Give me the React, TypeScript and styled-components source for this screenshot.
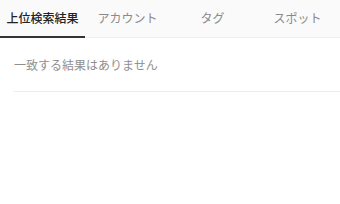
import React, { useState } from "react";
import styled, { createGlobalStyle } from "styled-components";

const Global = createGlobalStyle`
  html, body { margin: 0; padding: 0; background: #fff; }
  body { font-family: "Noto Sans CJK JP", "Noto Sans", sans-serif; }
`;

const Page = styled.div`
  width: 340px;
  height: 204px;
  background: #fff;
`;

const TabBar = styled.div`
  display: grid;
  grid-template-columns: repeat(4, 1fr);
  height: 38px;
  background: #fafafa;
  border-bottom: 1px solid #efefef;
  box-sizing: border-box;
`;

const Tab = styled.div<{ $active?: boolean }>`
  display: flex;
  align-items: center;
  justify-content: center;
  font-size: 12px;
  color: ${(p) => (p.$active ? "#222" : "#8a8a8a")};
  font-weight: ${(p) => (p.$active ? 500 : 400)};
  border-bottom: 2px solid ${(p) => (p.$active ? "#333" : "transparent")};
  margin-bottom: -1px;
  padding-bottom: 1px;
  box-sizing: border-box;
`;

const Body = styled.div`
  padding: 0 0 0 14px;
`;

const Message = styled.div`
  font-size: 12px;
  color: #8f8f8f;
  height: 54px;
  display: flex;
  align-items: center;
  padding-bottom: 1px;
  box-sizing: border-box;
  border-bottom: 1px solid #ececec;
`;

const tabs = ["上位検索結果", "アカウント", "タグ", "スポット"];

export default function App() {
  const [active, setActive] = useState(0);
  return (
    <Page>
      <Global />
      <TabBar>
        {tabs.map((t, i) => (
          <Tab key={t} $active={i === active} onClick={() => setActive(i)}>
            {t}
          </Tab>
        ))}
      </TabBar>
      <Body>
        <Message>一致する結果はありません</Message>
      </Body>
    </Page>
  );
}
